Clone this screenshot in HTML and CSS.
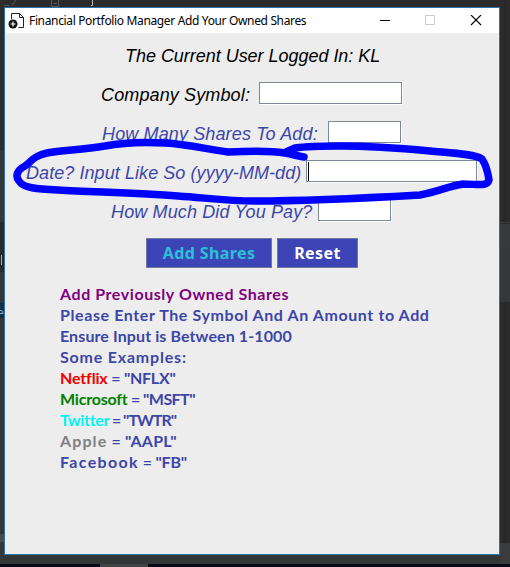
FILE: index.html
```
<!DOCTYPE html>
<html lang="en">
<head>
<meta charset="utf-8">
<title>Financial Portfolio Manager</title>
<link rel="stylesheet" href="styles.css">
</head>
<body>
<div class="desktop">
  <svg class="backdrop" width="510" height="567" aria-hidden="true">
    <rect width="510" height="567" fill="#2b2b2b"/>
    <rect width="5" height="567" fill="#343637"/>
    <rect width="5" height="150" fill="#2b2c2d"/>
    <rect y="222" width="5" height="50" fill="#27292a"/>
    <path d="M1.5 255v10" stroke="#a9a9a9"/>
    <rect y="303" width="5" height="15" fill="#12304b"/>
    <path d="M0 313.500h3.500M0 310.500c4 0 4 3 0 3" stroke="#9eacb8" fill="none"/>
    <rect y="534" width="5" height="8" fill="#4a4b49"/>
    <rect x="500" y="222" width="10" height="80" fill="#373a3b"/>
    <path d="M500 223.500h10M500 247.500h10M500 271.500h10" stroke="#292b2c"/>
    <rect x="500" y="247" width="10" height="55" fill="#353839"/>
    <path d="M505 0v222M505 302v241" stroke="#252525" stroke-width="1"/>
    <rect x="500" y="543" width="10" height="22" fill="#393b3c"/>
    <rect y="555" width="500" height="10" fill="#343738"/>
    <rect y="564" width="510" height="3" fill="#080b17"/>
    <rect x="100" y="564" width="48" height="3" fill="#414447"/>
    <path d="M51.500 0v6.500h7V0M53 3.500h4" stroke="#55585a" fill="none"/>
    <path d="M4 5.500h5M12 5.500l4-5.500" stroke="#55585a" fill="none"/>
    <path d="M92.500 0v5.500h-1.500" stroke="#b5b5b5" fill="none"/>
  </svg>
  <main class="window">
    <header class="titlebar">
      <svg class="app-icon" width="18" height="18" viewBox="0 0 18 18">
        <path d="M3.500 7V1.500h8l4 4v10h-5M11.500 1.500v4h4" fill="none" stroke="#222"/>
        <circle cx="5" cy="12" r="4.500" fill="#111"/>
        <path d="M2.500 12h5M5 9.500v5" stroke="#fff" stroke-width="1.200"/>
      </svg>
      <span class="title">Financial Portfolio Manager Add Your Owned Shares</span>
      <svg class="controls" width="104" height="12" viewBox="0 0 104 12" fill="none">
        <path d="M0 5.500h10" stroke="#000"/>
        <rect x="45.500" y="0.500" width="9" height="9" stroke="#ccc"/>
        <path d="M91 0l10 10M101 0L91 10" stroke="#000" stroke-width="1.100"/>
      </svg>
    </header>
    <form class="form">
      <div class="row user"><span class="label">The Current User Logged In: KL</span></div>
      <div class="row symbol"><label class="label" for="symbol">Company Symbol:</label><input id="symbol" class="field"></div>
      <div class="row shares"><label class="label" for="shares">How Many Shares To Add:</label><input id="shares" class="field"></div>
      <div class="row date"><label class="label" for="date">Date? Input Like So (yyyy-MM-dd)</label><div class="field focused"><i class="caret"></i></div></div>
      <div class="row paid"><label class="label" for="paid">How Much Did You Pay?</label><input id="paid" class="field"></div>
      <div class="actions">
        <button type="button" class="btn add"><span>Add Shares</span></button>
        <button type="button" class="btn reset"><span>Reset</span></button>
      </div>
    </form>
    <section class="help">
      <p class="purple l1">Add Previously Owned Shares</p>
      <p class="l2">Please Enter The Symbol And An Amount to Add</p>
      <p class="l3">Ensure Input is Between 1-1000</p>
      <p class="l4">Some Examples:</p>
      <p class="l5"><span class="red">Netflix</span> = "NFLX"</p>
      <p class="l6"><span class="green">Microsoft</span> = "MSFT"</p>
      <p class="l7"><span class="cyan">Twitter</span> = "TWTR"</p>
      <p class="l8"><span class="gray">Apple</span> = "AAPL"</p>
      <p class="l9"><span class="blue">Facebook</span> = "FB"</p>
    </section>
  </main>
  <svg class="marker" width="510" height="567" aria-hidden="true">
    <path d="M304 157C297 156 292 154 285 153C268 150 248 151 228 152C210 150 188 144 165 143C148 142 125 142 105 146C82 150 62 150 47 153C33 156 31 162 25 166C17 170 15 176 19 181C23 188 37 189 58 190C93 192 137 193 178 196C207 198 228 201 255 201C302 201 367 198 420 195C440 191 449 186 463 184C478 184 487 187 489 180C488 173 486 165 482 159C475 154 451 153 430 151C398 148 370 146 340 146C320 146 302 147 295 148L286 152"/>
  </svg>
</div>
</body>
</html>
```
FILE: styles.css
```
* { box-sizing: border-box; }
body { margin: 0; overflow: hidden; }
.desktop { position: relative; width: 510px; height: 567px; padding: 7px 10px 12px 4px; background: #2b2b2b; }
.backdrop, .marker { position: absolute; top: 0; left: 0; pointer-events: none; }
.marker path { fill: none; stroke: #0000fe; stroke-width: 7.5; stroke-linecap: round; stroke-linejoin: round; }
.window { position: relative; width: 496px; height: 548px; border: 1px solid #2874a6; background: #ededed; }
.titlebar { display: flex; align-items: center; height: 25px; padding-left: 3px; background: #fff; }
.app-icon { flex: none; margin-right: 3px; }
.title { flex: none; width: 351px; font: 12px/24px "Noto Sans", sans-serif; letter-spacing: -0.35px; white-space: nowrap; color: #000; }
.controls { flex: none; }
.form { padding-top: 3px; font: italic 18px/38px "Liberation Sans", Arial, sans-serif; color: #3c46a8; }
.row { display: flex; align-items: center; height: 39px; }
.label { flex: none; white-space: nowrap; letter-spacing: 0.13px; }
.field { flex: none; height: 22px; margin: 0 0 4px; padding: 0; border: 1px solid #7a8a99; background: #fff; border-radius: 0; box-shadow: 1px 1px #fff; }
.user { padding-left: 120px; color: #000; }
.user .label { letter-spacing: -0.03px; }
.symbol { padding-left: 96px; color: #000; }
.symbol .label { width: 158px; }
.symbol .field { width: 143px; }
.shares { padding-left: 97px; }
.shares .label { width: 226px; }
.shares .field { width: 73px; }
.date { padding-left: 21px; }
.date .label { width: 280px; letter-spacing: 0.07px; }
.date .field { width: 171px; padding: 1px; }
.caret { display: block; width: 1px; height: 19px; background: #000; }
.paid { padding-left: 106px; }
.paid .label { width: 207px; }
.paid .field { width: 73px; }
.actions { display: flex; gap: 5px; padding: 7px 0 0 141px; }
.btn { height: 30px; padding: 0; border: 1px solid #71789c; border-radius: 0; background: #3d44b5; font: bold 16px/26px "Noto Sans", Tahoma, sans-serif; letter-spacing: 0.4px; color: #fff; white-space: nowrap; }
.add { width: 126px; color: #2bc0d8; }
.reset { width: 81px; }
.help { padding: 15px 0 0 55px; font: bold 16px/21px Lato, "Century Gothic", sans-serif; color: #3c46a8; }
.help p { margin: 0; height: 21px; white-space: nowrap; }
.help .purple { color: #800080; }
.l1 { letter-spacing: 0.56px; }
.l2 { letter-spacing: 0.6px; }
.l3 { letter-spacing: 0.1px; }
.l4 { letter-spacing: 0.8px; }
.l5 { letter-spacing: -0.25px; }
.l6 { letter-spacing: -0.55px; }
.l7 { letter-spacing: -1px; }
.l8 { letter-spacing: 0.2px; }
.l9 { letter-spacing: -0.2px; }
.red { color: #f00000; letter-spacing: -0.15px; }
.green { color: #008000; letter-spacing: -0.2px; }
.cyan { color: #00f4f4; letter-spacing: -0.35px; }
.gray { color: #808080; letter-spacing: 1.1px; }
.blue { letter-spacing: 1.35px; }
```
